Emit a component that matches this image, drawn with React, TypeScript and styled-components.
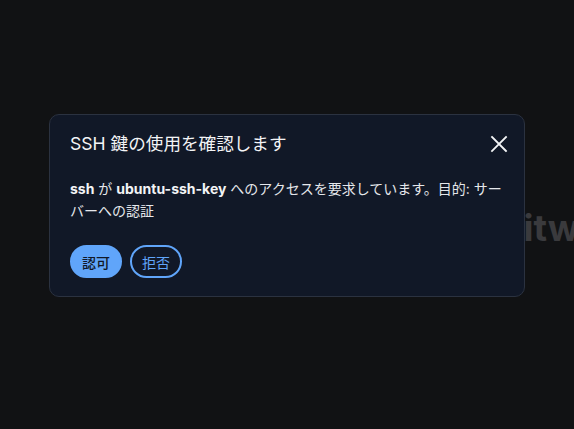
import React from 'react';
import styled, { createGlobalStyle } from 'styled-components';

const GlobalStyle = createGlobalStyle`
	html, body {
		margin: 0;
		padding: 0;
		background: #111214;
	}
	body {
		font-family: Inter, "Noto Sans CJK JP", sans-serif;
		-webkit-font-smoothing: antialiased;
	}
`;

const Page = styled.div`
	width: 574px;
	height: 429px;
	display: flex;
	align-items: center;
	overflow: hidden;
	padding-left: 499px;
	box-sizing: border-box;
`;

const Wordmark = styled.h1`
	margin: 0;
	padding-top: 26px;
	font-size: 37px;
	font-weight: 700;
	color: #3a3a3d;
	white-space: nowrap;
`;

const Overlay = styled.div`
	position: fixed;
	inset: 0;
	display: flex;
	justify-content: center;
	align-items: flex-start;
	padding-top: 114px;
`;

const Dialog = styled.div`
	width: 476px;
	box-sizing: border-box;
	background: #111827;
	border: 1px solid #2b3240;
	border-radius: 10px;
	padding: 17px 20px 18px 20px;
	color: #f3f4f6;
`;

const Header = styled.div`
	display: flex;
	align-items: center;
	justify-content: space-between;
`;

const Title = styled.h2`
	margin: 0;
	font-size: 17.6px;
	font-weight: 400;
	line-height: 24px;
	color: #f3f4f6;
`;

const CloseButton = styled.button`
	display: flex;
	align-items: center;
	justify-content: center;
	width: 24px;
	height: 24px;
	padding: 0;
	margin-right: -7px;
	border: none;
	background: none;
	color: #f3f4f6;
	cursor: pointer;
`;

const Message = styled.p`
	margin: 22px 0 0;
	font-size: 14px;
	line-height: 22px;
	color: #e5e7eb;

	b {
		font-weight: 700;
		color: #f3f4f6;
	}
`;

const Actions = styled.div`
	display: flex;
	gap: 8px;
	margin-top: 23px;
`;

const Button = styled.button<{ $primary?: boolean }>`
	height: 33px;
	padding: 0 10px;
	border-radius: 999px;
	font-family: inherit;
	font-size: 14px;
	font-weight: ${({ $primary }) => ($primary ? 500 : 400)};
	cursor: pointer;
	box-sizing: border-box;
	border: 2px solid #60a5fa;
	background: ${({ $primary }) => ($primary ? '#60a5fa' : 'transparent')};
	color: ${({ $primary }) => ($primary ? '#111827' : '#60a5fa')};
`;

export default function App() {
	return (
		<>
			<GlobalStyle />
			<Page>
				<Wordmark>Bitwarden</Wordmark>
			</Page>
			<Overlay>
				<Dialog role="dialog" aria-modal="true">
					<Header>
						<Title>SSH 鍵の使用を確認します</Title>
						<CloseButton aria-label="閉じる">
							<svg width="18" height="18" viewBox="0 0 18 18" fill="none" stroke="currentColor" strokeWidth="1.8" strokeLinecap="square">
								<path d="M2 2L16 16M16 2L2 16" />
							</svg>
						</CloseButton>
					</Header>
					<Message>
						<b>ssh</b> が <b>ubuntu-ssh-key</b> へのアクセスを要求しています。目的: サーバーへの認証
					</Message>
					<Actions>
						<Button $primary>認可</Button>
						<Button>拒否</Button>
					</Actions>
				</Dialog>
			</Overlay>
		</>
	);
}
